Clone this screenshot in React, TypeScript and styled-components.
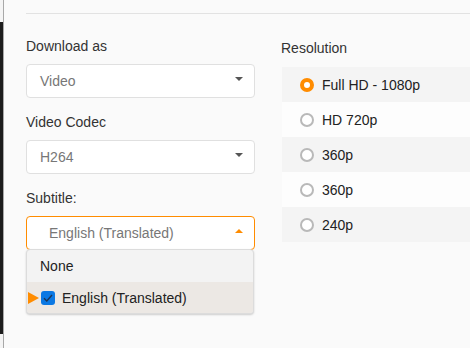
import React from "react";
import styled, { createGlobalStyle } from "styled-components";

const GlobalStyle = createGlobalStyle`
  html, body {
    margin: 0;
    padding: 0;
    background: #fafafa;
    font-family: "Liberation Sans", Arial, sans-serif;
  }
`;

const orange = "#ff8c00";

const Page = styled.div`
  display: flex;
  width: 470px;
  height: 348px;
  overflow: hidden;
  background: #fafafa;
`;

const Edge = styled.div`
  width: 3px;
  flex: none;
  background: linear-gradient(
    to bottom,
    #f4f4f4 22px,
    #1c1c1c 22px,
    #1c1c1c 334px,
    #f4f4f4 334px
  );
  border-right: 1px solid #a8a8a8;
`;

const Panel = styled.div`
  flex: 1;
  padding-left: 22px;
`;

const TopRule = styled.div`
  height: 13px;
  border-bottom: 1px solid #e2e2e2;
`;

const Columns = styled.div`
  display: grid;
  grid-template-columns: 229px 1fr;
  column-gap: 26px;
  padding-top: 24px;
`;

const Column = styled.div<{ $offset?: number }>`
  display: flex;
  flex-direction: column;
  padding-top: ${(p) => p.$offset ?? 0}px;
`;

const Field = styled.div`
  position: relative;
  margin-bottom: 16px;
`;

const Label = styled.div<{ $gap?: number }>`
  font-size: 14px;
  line-height: 16px;
  color: #333;
  margin-bottom: ${(p) => p.$gap ?? 10}px;
`;

const Select = styled.div<{ $open?: boolean }>`
  position: relative;
  box-sizing: border-box;
  height: 34px;
  display: flex;
  align-items: center;
  padding-left: ${(p) => (p.$open ? "22px" : "13px")};
  border: 1px solid ${(p) => (p.$open ? orange : "#e0e0e0")};
  border-radius: 4px;
  background: #fff;
  font-size: 14px;
  color: #777;
`;

const Caret = styled.span<{ $up?: boolean }>`
  position: absolute;
  right: 11px;
  top: 12px;
  width: 0;
  height: 0;
  border-left: 4px solid transparent;
  border-right: 4px solid transparent;
  ${(p) =>
    p.$up
      ? `border-bottom: 4px solid ${orange};`
      : `border-top: 4px solid #555;`}
`;

const Menu = styled.div`
  position: absolute;
  left: 0;
  top: 59px;
  width: 228px;
  box-sizing: border-box;
  background: #f3f3f3;
  border: 1px solid #dcdcdc;
  border-radius: 4px;
  box-shadow: 0 1px 2px rgba(0, 0, 0, 0.18);
  z-index: 2;
`;

const MenuItem = styled.div<{ $active?: boolean }>`
  position: relative;
  height: ${(p) => (p.$active ? "31px" : "32px")};
  display: flex;
  align-items: center;
  padding-left: ${(p) => (p.$active ? "14px" : "13px")};
  gap: 7px;
  font-size: 14px;
  color: #222;
  background: ${(p) => (p.$active ? "#ece8e4" : "transparent")};
  border-radius: ${(p) => (p.$active ? "0 0 3px 3px" : "3px 3px 0 0")};
`;

const Pointer = styled.span`
  position: absolute;
  left: 1px;
  top: 10px;
  width: 0;
  height: 0;
  border-top: 6px solid transparent;
  border-bottom: 6px solid transparent;
  border-left: 11px solid ${orange};
`;

const Check = styled.span`
  width: 14px;
  height: 14px;
  border-radius: 3px;
  background: #0b78e3;
  display: flex;
  align-items: center;
  justify-content: center;
`;

const RadioList = styled.div`
  display: flex;
  flex-direction: column;
  margin-left: 1px;
`;

const RadioRow = styled.div<{ $shade: boolean }>`
  height: 35px;
  display: flex;
  align-items: center;
  gap: 8px;
  padding-left: 18px;
  background: ${(p) => (p.$shade ? "#f4f4f4" : "#fdfdfd")};
  font-size: 14px;
  color: #222;
`;

const Radio = styled.span<{ $checked: boolean }>`
  box-sizing: border-box;
  width: 14px;
  height: 14px;
  border-radius: 50%;
  border: ${(p) => (p.$checked ? `4px solid ${orange}` : "2px solid #b9b9b9")};
  background: #fff;
`;

const resolutions = ["Full HD - 1080p", "HD 720p", "360p", "360p", "240p"];

export default function App() {
  return (
    <Page>
      <GlobalStyle />
      <Edge />
      <Panel>
        <TopRule />
        <Columns>
          <Column>
            <Field>
              <Label>Download as</Label>
              <Select>
                Video
                <Caret />
              </Select>
            </Field>
            <Field>
              <Label>Video Codec</Label>
              <Select>
                H264
                <Caret />
              </Select>
            </Field>
            <Field>
              <Label>Subtitle:</Label>
              <Select $open>
                English (Translated)
                <Caret $up />
              </Select>
              <Menu>
                <MenuItem>None</MenuItem>
                <MenuItem $active>
                  <Pointer />
                  <Check>
                    <svg width="10" height="8" viewBox="0 0 10 8">
                      <path
                        d="M1 4.2 L3.8 7 L9 1"
                        fill="none"
                        stroke="#1d3557"
                        strokeWidth="1.4"
                      />
                    </svg>
                  </Check>
                  English (Translated)
                </MenuItem>
              </Menu>
            </Field>
          </Column>
          <Column $offset={2}>
            <Label $gap={11}>Resolution</Label>
            <RadioList>
              {resolutions.map((r, i) => (
                <RadioRow key={i} $shade={i % 2 === 0}>
                  <Radio $checked={i === 0} />
                  {r}
                </RadioRow>
              ))}
            </RadioList>
          </Column>
        </Columns>
      </Panel>
    </Page>
  );
}
